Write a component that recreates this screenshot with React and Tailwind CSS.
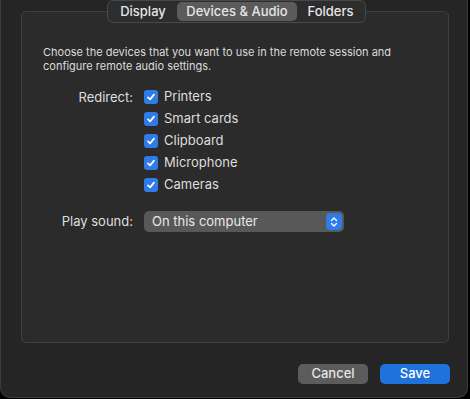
import React from "react";

const items = ["Printers", "Smart cards", "Clipboard", "Microphone", "Cameras"];

function Check() {
  return (
    <span className="flex h-[14px] w-[14px] items-center justify-center rounded-[3px] bg-[#2f7ce8]">
      <svg width="10" height="10" viewBox="0 0 10 10" fill="none">
        <path d="M2 5.3 L4.1 7.4 L8 2.6" stroke="white" strokeWidth="1.7" strokeLinecap="round" strokeLinejoin="round" />
      </svg>
    </span>
  );
}

export default function App() {
  return (
    <div className="h-[399px] w-[470px] bg-black" style={{ fontFamily: "Inter, 'Liberation Sans', sans-serif" }}>
      <div className="flex h-[398px] w-[468px] flex-col rounded-b-[10px] border-x border-b border-[#3c3c3c] bg-[#252525] text-[#dedede]">
        <div className="relative ml-[20px] mt-[11px] h-[332px] w-[428px] rounded-[5px] border border-[#3f3f3f] bg-[#2b2b2b]">
          <div className="absolute left-[85px] top-[-12px] flex h-[23px] w-[259px] items-center rounded-[6px] border border-[#484848] bg-[#2d2d2d] px-[1px] text-[13px] font-medium text-[#e6e6e6]">
            <div className="flex h-full w-[68px] items-center justify-center">Display</div>
            <div className="flex h-[19px] w-[120px] items-center justify-center rounded-[5px] bg-[#5b5b5b]">Devices &amp; Audio</div>
            <div className="flex h-full flex-1 items-center justify-center">Folders</div>
          </div>
          <div className="px-[21px] pt-[33px] text-[11px] leading-[14px] text-[#dcdcdc]">
            Choose the devices that you want to use in the remote session and
            <br />
            configure remote audio settings.
          </div>
          <div className="mt-[13px] flex text-[13px]">
            <div className="w-[111px] text-right leading-[22px]">Redirect:</div>
            <div className="ml-[11px] flex flex-col">
              {items.map((t) => (
                <div key={t} className="flex h-[22px] items-center gap-[6px]">
                  <Check />
                  <span>{t}</span>
                </div>
              ))}
            </div>
          </div>
          <div className="mt-[15px] flex items-center text-[13px]">
            <div className="w-[111px] text-right">Play sound:</div>
            <div className="ml-[11px] flex h-[21px] w-[200px] items-center justify-between rounded-[5px] bg-[#585858] pl-[8px] pr-[2px] text-[#e8e8e8]">
              <span>On this computer</span>
              <span className="flex h-[17px] w-[16px] items-center justify-center rounded-[4px] bg-[#2f7ce8]">
                <svg width="8" height="12" viewBox="0 0 8 12" fill="none">
                  <path d="M1.5 4.5 L4 2 L6.5 4.5 M1.5 7.5 L4 10 L6.5 7.5" stroke="white" strokeWidth="1.4" strokeLinecap="round" strokeLinejoin="round" />
                </svg>
              </span>
            </div>
          </div>
        </div>
        <div className="mr-[17px] mt-[21px] flex justify-end gap-[12px] text-[13px] font-medium">
          <button className="flex h-[20px] w-[70px] items-center justify-center rounded-[5px] bg-[#5c5c5c] text-[#e6e6e6]">Cancel</button>
          <button className="flex h-[20px] w-[70px] items-center justify-center rounded-[5px] bg-[#1f71dc] text-white">Save</button>
        </div>
      </div>
    </div>
  );
}
